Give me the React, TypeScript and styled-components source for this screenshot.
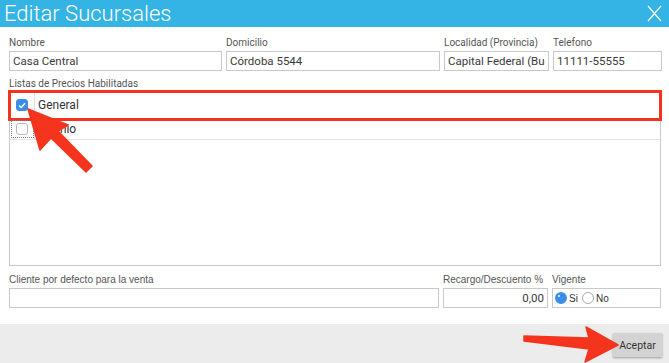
import { createGlobalStyle, styled } from "styled-components";

const GlobalStyle = createGlobalStyle`
  html, body {
    margin: 0;
    padding: 0;
    background: #ffffff;
  }
  body {
    font-family: Roboto, "Liberation Sans", Arial, sans-serif;
  }
`;

const Dialog = styled.div`
  position: relative;
  width: 669px;
  height: 363px;
  display: flex;
  flex-direction: column;
  background: #ffffff;
  overflow: hidden;
`;

const Header = styled.div`
  height: 27px;
  background: #34b4e4;
  display: flex;
  align-items: center;
  justify-content: space-between;
  padding: 0 7px 0 4px;
  color: #ffffff;
`;

const Title = styled.h1`
  margin: 0;
  font-family: Roboto, sans-serif;
  font-weight: 300;
  font-size: 22px;
  line-height: 27px;
  white-space: nowrap;
`;

const CloseButton = styled.button`
  border: none;
  background: transparent;
  padding: 0;
  width: 15px;
  height: 17px;
  display: flex;
  cursor: pointer;
`;

const Body = styled.div`
  flex: 1;
  padding: 10px 8px 0 9px;
  display: flex;
  flex-direction: column;
`;

const Row = styled.div`
  display: flex;
  gap: 4px;
`;

const Field = styled.div<{ $w?: number; $grow?: boolean }>`
  display: flex;
  flex-direction: column;
  width: ${(p) => (p.$w ? `${p.$w}px` : "auto")};
  flex: ${(p) => (p.$grow ? "1" : "none")};
`;

const Label = styled.label<{ $arial?: boolean }>`
  font-family: ${(p) =>
    p.$arial ? '"Liberation Sans", Arial, sans-serif' : "Roboto, sans-serif"};
  font-size: 10px;
  line-height: 12px;
  color: #555555;
  margin-bottom: 2px;
  white-space: nowrap;
`;

const Input = styled.input<{ $right?: boolean }>`
  box-sizing: border-box;
  height: 20px;
  width: 100%;
  border: 1px solid #c9c9c9;
  padding: 0 3px;
  font-family: Roboto, sans-serif;
  font-size: 11.5px;
  color: #3a3a3a;
  text-align: ${(p) => (p.$right ? "right" : "left")};
  outline: none;
  background: #ffffff;
`;

const Section = styled.div<{ $top: number }>`
  margin-top: ${(p) => p.$top}px;
  display: flex;
  flex-direction: column;
`;

const ListBox = styled.div`
  box-sizing: border-box;
  height: 174px;
  border: 1px solid #c9c9c9;
  border-top: none;
  display: flex;
  flex-direction: column;
`;

const ListRow = styled.div<{ $marked?: boolean; $h: number }>`
  display: flex;
  height: ${(p) => p.$h}px;
  border-bottom: 1px solid #e2e2e2;
  outline: ${(p) => (p.$marked ? "3px solid #f33320" : "none")};
  outline-offset: -1px;
  position: relative;
`;

const CheckCell = styled.div<{ $focus?: boolean }>`
  width: 24px;
  border-right: 1px solid #e2e2e2;
  display: flex;
  align-items: center;
  justify-content: center;
  outline: ${(p) => (p.$focus ? "1px dotted #6a7f99" : "none")};
  outline-offset: -2px;
`;

const Check = styled.span<{ $on?: boolean }>`
  box-sizing: border-box;
  width: 12px;
  height: 12px;
  border-radius: 3px;
  display: flex;
  align-items: center;
  justify-content: center;
  background: ${(p) => (p.$on ? "#3b8ee8" : "#ffffff")};
  border: 1px solid ${(p) => (p.$on ? "#3b8ee8" : "#b8b8b8")};
`;

const NameCell = styled.div`
  flex: 1;
  display: flex;
  align-items: center;
  padding-left: 3px;
  font-family: Roboto, sans-serif;
  font-size: 12px;
  color: #333333;
`;

const RadioGroup = styled.div`
  box-sizing: border-box;
  height: 20px;
  border: 1px solid #c9c9c9;
  display: flex;
  align-items: center;
  padding-left: 2px;
  gap: 2px;
  font-family: "Liberation Sans", Arial, sans-serif;
  font-size: 10px;
  color: #333333;
`;

const Radio = styled.span<{ $on?: boolean }>`
  box-sizing: border-box;
  width: 12px;
  height: 12px;
  border-radius: 50%;
  background: ${(p) => (p.$on ? "#3b8ee8" : "#ffffff")};
  border: ${(p) => (p.$on ? "4px solid #3b8ee8" : "1px solid #a8a8a8")};
  position: relative;
  &::after {
    content: "";
    display: ${(p) => (p.$on ? "block" : "none")};
    position: absolute;
    left: -1px;
    top: -1px;
    width: 2px;
    height: 2px;
    border-radius: 50%;
    background: #ffffff;
  }
`;

const RadioText = styled.span`
  margin-right: 2px;
`;

const Footer = styled.div`
  height: 39px;
  background: #ececec;
  display: flex;
  align-items: center;
  justify-content: flex-end;
  padding-right: 7px;
`;

const AcceptButton = styled.button`
  height: 24px;
  width: 49px;
  border: none;
  background: #d3d3d3;
  box-shadow: 0 1px 2px rgba(0, 0, 0, 0.35);
  font-family: Roboto, sans-serif;
  font-size: 10.5px;
  color: #333333;
  padding: 0;
  cursor: pointer;
  margin-top: 3px;
`;

const Annotations = styled.svg`
  position: absolute;
  left: 0;
  top: 0;
  pointer-events: none;
`;

export default function App() {
  return (
    <Dialog>
      <GlobalStyle />
      <Header>
        <Title>Editar Sucursales</Title>
        <CloseButton aria-label="Cerrar">
          <svg width="15" height="17" viewBox="0 0 15 17">
            <path d="M1 1 L14 16 M14 1 L1 16" stroke="#ffffff" strokeWidth="1.2" fill="none" />
          </svg>
        </CloseButton>
      </Header>
      <Body>
        <Row>
          <Field $w={213}>
            <Label>Nombre</Label>
            <Input defaultValue="Casa Central" />
          </Field>
          <Field $w={214}>
            <Label>Domicilio</Label>
            <Input defaultValue="Córdoba 5544" />
          </Field>
          <Field $w={105}>
            <Label>Localidad (Provincia)</Label>
            <Input defaultValue="Capital Federal (Buenos Aires)" />
          </Field>
          <Field $w={109}>
            <Label>Telefono</Label>
            <Input defaultValue="11111-55555" />
          </Field>
        </Row>
        <Section $top={7}>
          <Label>Listas de Precios Habilitadas</Label>
          <ListBox>
            <ListRow $marked $h={26}>
              <CheckCell>
                <Check $on>
                  <svg width="8" height="7" viewBox="0 0 8 7">
                    <path d="M1 3.6 L3.1 5.6 L7 1.2" stroke="#fff" strokeWidth="1.4" fill="none" />
                  </svg>
                </Check>
              </CheckCell>
              <NameCell>General</NameCell>
            </ListRow>
            <ListRow $h={20}>
              <CheckCell $focus>
                <Check />
              </CheckCell>
              <NameCell>Premio</NameCell>
            </ListRow>
          </ListBox>
        </Section>
        <Section $top={8}>
          <Row>
            <Field $grow>
              <Label $arial>Cliente por defecto para la venta</Label>
              <Input />
            </Field>
            <Field $w={105}>
              <Label $arial>Recargo/Descuento %</Label>
              <Input $right defaultValue="0,00" />
            </Field>
            <Field $w={109}>
              <Label $arial>Vigente</Label>
              <RadioGroup>
                <Radio $on />
                <RadioText>Si</RadioText>
                <Radio />
                <RadioText>No</RadioText>
              </RadioGroup>
            </Field>
          </Row>
        </Section>
      </Body>
      <Footer>
        <AcceptButton>Aceptar</AcceptButton>
      </Footer>
      <Annotations width="669" height="363" viewBox="0 0 669 363">
        <path
          d="M28 109 L68 125 L58 131 L92 166 L86 172 L51 138 L40 150 Z"
          fill="#f5341d"
          stroke="#f5341d"
          strokeLinejoin="round"
          strokeWidth="1.5"
        />
        <path
          d="M618 345 L585 362 L589 349 L524 341 L524 336 L589 338 L586 327 Z"
          fill="#f5341d"
          stroke="#f5341d"
          strokeLinejoin="round"
          strokeWidth="1.5"
        />
      </Annotations>
    </Dialog>
  );
}
